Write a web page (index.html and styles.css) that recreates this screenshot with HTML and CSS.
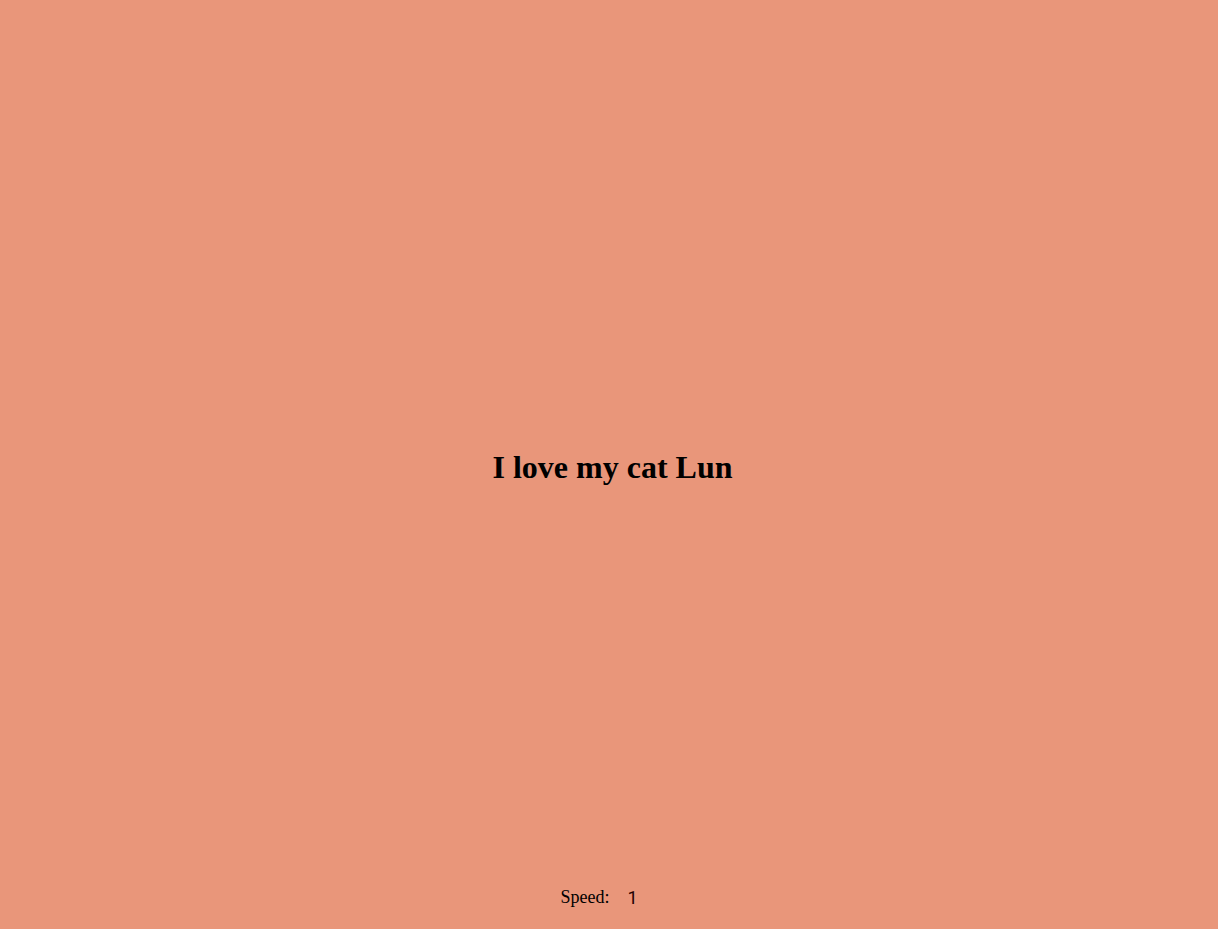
FILE: index.html
```html
<!DOCTYPE html>
<html lang="en">
<head>
<meta charset="utf-8">
<title>Text effect</title>
<link rel="stylesheet" href="styles.css">
</head>
<body class="page">
<main class="stage"><h1 class="headline">I love my cat Lun</h1></main>
<div class="controls">
<label class="controls-label" for="speed">Speed:</label>
<input class="controls-input" type="number" id="speed" name="speed" value="1" min="1" max="10" step="1">
</div>
</body>
</html>
```
FILE: styles.css
```css
* {
  box-sizing: border-box;
}

.page {
  display: flex;
  flex-direction: column;
  min-height: 100vh;
  margin: 0;
  background: darksalmon;
  color: #000;
  font-family: "Liberation Serif", "Times New Roman", serif;
}

.stage {
  display: flex;
  flex: 1;
  align-items: center;
  justify-content: center;
  padding: 64px 0 0 7px;
}

.headline {
  margin: 0;
  font-size: 32px;
}

.controls {
  display: flex;
  align-items: center;
  justify-content: center;
  gap: 8px;
  padding: 10px 0 16px;
  font-size: 18px;
}

.controls-input {
  width: 40px;
  height: 32px;
  padding: 0 0 0 10px;
  border: 0;
  background: darksalmon;
  color: #200;
  font-family: Roboto, Arial, sans-serif;
  font-size: 18px;
  appearance: textfield;
}

.controls-input::-webkit-inner-spin-button {
  margin: 0;
  appearance: none;
}
```
